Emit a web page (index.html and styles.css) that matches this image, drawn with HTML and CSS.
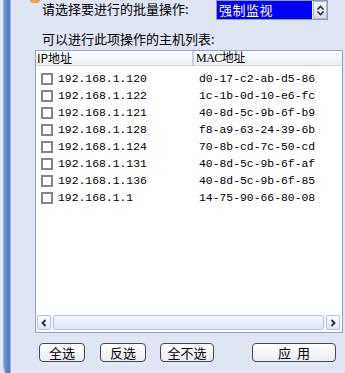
FILE: index.html
```html
<!DOCTYPE html>
<html lang="zh-CN">
<head>
  <meta charset="UTF-8">
  <title>批量操作</title>
  <link rel="stylesheet" href="styles.css">
</head>
<body>
  <div class="window">
    <div class="edge"></div>
    <div class="panel">
      <span class="corner-icon"></span>

      <div class="op-row">
        <div class="op-label">请选择要进行的批量操作:</div>
        <div class="select">
          <span class="select-value">强制监视</span>
          <span class="select-btn">
            <svg width="9" height="11" viewBox="0 0 9 11">
              <path d="M1.5 4.5 L4.5 1.5 L7.5 4.5 M1.5 6.5 L4.5 9.5 L7.5 6.5" fill="none" stroke="#333" stroke-width="1.6"/>
            </svg>
          </span>
        </div>
      </div>

      <div class="hint">可以进行此项操作的主机列表:</div>

      <div class="list">
        <div class="list-head">
          <div class="col col-ip">IP地址</div>
          <div class="col col-mac">MAC地址</div>
        </div>
        <div class="list-body">
          <div class="row"><span class="check"></span><span class="ip">192.168.1.120</span><span class="mac">d0-17-c2-ab-d5-86</span></div>
          <div class="row"><span class="check"></span><span class="ip">192.168.1.122</span><span class="mac">1c-1b-0d-10-e6-fc</span></div>
          <div class="row"><span class="check"></span><span class="ip">192.168.1.121</span><span class="mac">40-8d-5c-9b-6f-b9</span></div>
          <div class="row"><span class="check"></span><span class="ip">192.168.1.128</span><span class="mac">f8-a9-63-24-39-6b</span></div>
          <div class="row"><span class="check"></span><span class="ip">192.168.1.124</span><span class="mac">70-8b-cd-7c-50-cd</span></div>
          <div class="row"><span class="check"></span><span class="ip">192.168.1.131</span><span class="mac">40-8d-5c-9b-6f-af</span></div>
          <div class="row"><span class="check"></span><span class="ip">192.168.1.136</span><span class="mac">40-8d-5c-9b-6f-85</span></div>
          <div class="row"><span class="check"></span><span class="ip">192.168.1.1</span><span class="mac">14-75-90-66-80-08</span></div>
        </div>
        <div class="hscroll">
          <span class="arrow">
            <svg width="8" height="8" viewBox="0 0 8 8"><path d="M5.5 1 L2.5 4 L5.5 7" fill="none" stroke="#1d2b55" stroke-width="1.8"/></svg>
          </span>
          <span class="thumb"></span>
          <span class="arrow">
            <svg width="8" height="8" viewBox="0 0 8 8"><path d="M2.5 1 L5.5 4 L2.5 7" fill="none" stroke="#1d2b55" stroke-width="1.8"/></svg>
          </span>
        </div>
      </div>

      <div class="actions">
        <button class="btn btn-all">全选</button>
        <button class="btn btn-invert">反选</button>
        <button class="btn btn-none">全不选</button>
        <button class="btn btn-apply">应&nbsp;&nbsp;用</button>
      </div>
    </div>
  </div>
</body>
</html>
```

FILE: styles.css
```css
body {
  margin: 0;
  width: 345px;
  height: 373px;
  overflow: hidden;
  background: #dfe5f3;
  font-family: "Noto Sans CJK SC", "Liberation Sans", sans-serif;
  font-size: 13px;
  color: #000;
}
.window {
  display: flex;
  height: 373px;
}
.edge {
  flex: 0 0 13px;
  background: linear-gradient(to right, #e4e9f5 0, #e4e9f5 3px, #9fb3e2 3px, #6d8fdb 5px, #4e72cc 9px, #6a88d2 10px, #c9d4ee 11px, #f4f6fb 12px, #dfe5f3 13px);
  clip-path: polygon(0 0, 100% 0, 100% 100%, 40% 100%, 0 96%);
}
.panel {
  flex: 1;
  position: relative;
  padding: 0 2px 0 22px;
}
.corner-icon {
  position: absolute;
  left: 17px;
  top: 0;
  width: 10px;
  height: 3px;
  background: #f2a04a;
  border-radius: 0 0 3px 3px;
}

/* 操作选择 */
.op-row {
  display: flex;
  height: 20px;
}
.op-label {
  width: 181px;
  padding-left: 7px;
  line-height: 18px;
  box-sizing: border-box;
  white-space: nowrap;
}
.select {
  display: flex;
  width: 112px;
  height: 20px;
  box-sizing: border-box;
  border: 1px solid #8d9bb5;
  background: #fff;
}
.select-value {
  flex: 1;
  background: #0000ff;
  color: #fff;
  line-height: 18px;
  padding-left: 2px;
  font-size: 13px;
  letter-spacing: 0.5px;
}
.select-btn {
  width: 14px;
  margin-left: 1px;
  display: flex;
  align-items: center;
  justify-content: center;
  background: linear-gradient(#f3f5fa, #d6dcea);
  border: 1px solid #aab6cf;
  box-sizing: border-box;
}

.hint {
  margin-top: 11px;
  padding-left: 7px;
  line-height: 16px;
}

/* 主机列表 */
.list {
  margin-top: 3px;
  height: 283px;
  box-sizing: border-box;
  border: 1px solid #8fa2c4;
  background: #fff;
  display: flex;
  flex-direction: column;
}
.list-head {
  display: flex;
  height: 14px;
  background: linear-gradient(#fdfdfd, #eceef2);
  border-bottom: 1px solid #d3d7df;
  font-size: 12px;
  line-height: 14px;
}
.col {
  white-space: nowrap;
}
.col-ip {
  width: 155px;
  padding-left: 1px;
  border-right: 2px solid #c6cde0;
}
.col-mac {
  flex: 1;
  padding-left: 2px;
  font-family: "Liberation Serif", "Noto Sans CJK SC", serif;
  letter-spacing: -0.5px;
}
.list-body {
  flex: 1;
  padding-top: 4px;
}
.row {
  display: flex;
  align-items: center;
  height: 17px;
  font-family: "Liberation Mono", monospace;
  font-size: 11.4px;
}
.check {
  width: 12px;
  height: 12px;
  box-sizing: border-box;
  border: 2px solid #858585;
  margin-left: 5px;
  background: #fff;
}
.ip {
  width: 141px;
  margin-left: 5px;
}
.mac {
  white-space: nowrap;
}

.hscroll {
  display: flex;
  height: 15px;
  margin: 0 2px 2px 1px;
  background: #f3f5fa;
}
.arrow {
  width: 14px;
  height: 15px;
  box-sizing: border-box;
  border: 1px solid #b4c2e3;
  border-radius: 2px;
  background: linear-gradient(#ffffff, #dce4f6);
  display: flex;
  align-items: center;
  justify-content: center;
}
.thumb {
  flex: 1;
  margin: 0 2px;
  border: 1px solid #b5c5ec;
  border-radius: 3px;
  background: linear-gradient(#f5f7fd, #dde5f7);
}

/* 按钮 */
.actions {
  display: flex;
  margin-top: 10px;
  padding-left: 4px;
}
.btn {
  height: 19px;
  padding: 0;
  border: 1px solid #4a4a4a;
  border-radius: 4px;
  background: linear-gradient(#ffffff, #e9ecf3);
  font-family: "Noto Sans CJK SC", sans-serif;
  font-size: 13px;
  line-height: 17px;
  color: #000;
}
.btn-all { width: 46px; }
.btn-invert { width: 46px; margin-left: 15px; }
.btn-none { width: 54px; margin-left: 14px; }
.btn-apply { width: 84px; margin-left: 38px; }
```
